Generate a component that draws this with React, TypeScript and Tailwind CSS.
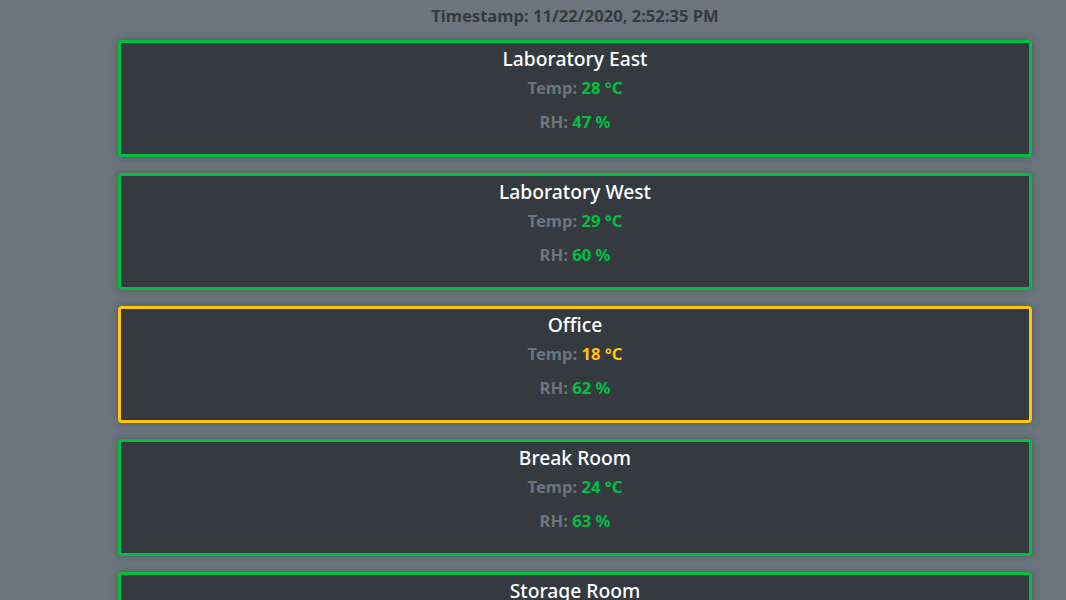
import React from "react";

type Room = { name: string; temp: number; rh: number; tempWarn?: boolean; warn?: boolean };

const rooms: Room[] = [
  { name: "Laboratory East", temp: 28, rh: 47 },
  { name: "Laboratory West", temp: 29, rh: 60 },
  { name: "Office", temp: 18, rh: 62, tempWarn: true, warn: true },
  { name: "Break Room", temp: 24, rh: 63 },
  { name: "Storage Room", temp: 22, rh: 55 },
];

function Card({ room }: { room: Room }) {
  return (
    <div
      className={`h-[117px] rounded-[4px] border-[3px] bg-[#343a40] pt-[4px] text-center shadow-[0_0_8px_rgba(0,0,0,0.25)] ${
        room.warn ? "border-[#ffc50f]" : "border-[#00c040]"
      }`}
    >
      <div className="text-[19.3px] leading-[24px] font-medium text-white">{room.name}</div>
      <div className="mt-[5px] text-[16.6px] leading-[24px] font-bold text-[#6c757d]">
        Temp:{" "}
        <span className={room.tempWarn ? "text-[#ffc50f]" : "text-[#00c040]"}>{room.temp} °C</span>
      </div>
      <div className="mt-[10px] text-[16.6px] leading-[24px] font-bold text-[#6c757d]">
        RH: <span className="text-[#00c040]">{room.rh} %</span>
      </div>
    </div>
  );
}

export default function App() {
  return (
    <div
      className="h-[600px] overflow-hidden bg-[#6c757d] pl-[118px] pr-[34px]"
      style={{ fontFamily: '"Noto Sans", "Open Sans", sans-serif' }}
    >
      <div className="pt-[4px] text-center text-[16.6px] leading-[24px] font-bold text-[#343a40]">
        Timestamp: 11/22/2020, 2:52:35 PM
      </div>
      <div className="mt-[12px] flex flex-col gap-[16px]">
        {rooms.map((r) => (
          <Card key={r.name} room={r} />
        ))}
      </div>
    </div>
  );
}
